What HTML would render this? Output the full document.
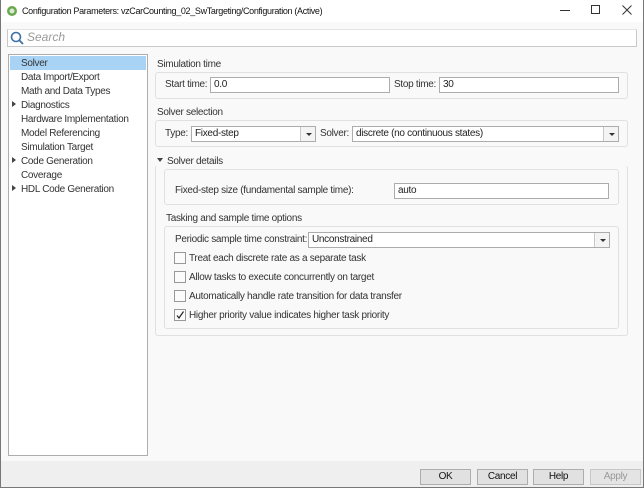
<!DOCTYPE html>
<html><head><style>
*{box-sizing:border-box;margin:0;padding:0}
body{width:644px;height:488px;overflow:hidden;background:#f9f9f9;font-family:"Liberation Sans",sans-serif;font-size:10px;letter-spacing:-0.3px;color:#333;position:relative}
.a{position:absolute;white-space:nowrap}
.inp{position:absolute;background:#fff;border:1px solid #acacac;height:16px;padding-left:3px;line-height:14px;color:#222;overflow:hidden}
.grp{position:absolute;border:1px solid #e0e0e0;border-radius:3px}
.arr{position:absolute;top:0;right:0;width:15px;height:14px;border-left:1px solid #c8c8c8;background:#f4f4f4}
.arr:after{content:"";position:absolute;left:5px;top:6px;border-left:3px solid transparent;border-right:3px solid transparent;border-top:3px solid #333}
.cb{position:absolute;width:12px;height:12px;border:1px solid #999;background:#fbfbfb}
.btn{position:absolute;top:469px;height:16px;width:51px;border:1px solid #adadad;background:#e1e1e1;text-align:center;line-height:14px;color:#111}
.tri{display:inline-block;border-top:3px solid transparent;border-bottom:3px solid transparent;border-left:4px solid #444;margin-right:5px;vertical-align:1px}
</style></head><body>
<div class="a" style="left:0;top:0;width:644px;height:22px;background:#fff"></div>
<div class="a" style="left:0;top:0;width:1px;height:488px;background:#777"></div>
<div class="a" style="left:643px;top:0;width:1px;height:488px;background:#777"></div>
<div class="a" style="left:0;top:487px;width:644px;height:1px;background:#777"></div>
<svg class="a" style="left:6px;top:5px" width="12" height="12"><circle cx="6" cy="6" r="5" fill="#6aa84f"/><circle cx="6" cy="6" r="2.5" fill="#d9ead3"/></svg>
<div class="a" style="left:22px;top:6px;font-size:9px;letter-spacing:-0.33px;color:#111">Configuration Parameters: vzCarCounting_02_SwTargeting/Configuration (Active)</div>
<div class="a" style="left:560px;top:10px;width:10px;height:1px;background:#333"></div>
<div class="a" style="left:591px;top:5px;width:9px;height:9px;border:1px solid #333"></div>
<svg class="a" style="left:622px;top:5px" width="10" height="10"><path d="M0.5 0.5L9.5 9.5M9.5 0.5L0.5 9.5" stroke="#333" stroke-width="1"/></svg>
<div class="a" style="left:7px;top:29px;width:630px;height:18px;background:#fff;border:1px solid #c8c8c8;border-top-color:#e4e4e4"></div>
<svg class="a" style="left:10px;top:31px" width="14" height="14"><circle cx="6" cy="6" r="4.5" fill="none" stroke="#3d6fa8" stroke-width="1.6"/><line x1="9.3" y1="9.3" x2="13" y2="13" stroke="#3d6fa8" stroke-width="1.8"/></svg>
<div class="a" style="left:27px;top:30px;font-size:12px;letter-spacing:0;font-style:italic;color:#9a9a9a">Search</div>
<div class="a" style="left:8px;top:54px;width:140px;height:402px;background:#fff;border:1px solid #adadad"></div>
<div class="a" style="left:10px;top:56px;width:136px;height:14px;background:#a9d3f5"></div>
<div class="a" style="left:12px;top:57px;line-height:14px">
<div style="padding-left:9px">Solver</div>
<div style="padding-left:9px">Data Import/Export</div>
<div style="padding-left:9px">Math and Data Types</div>
<div><span class="tri"></span>Diagnostics</div>
<div style="padding-left:9px">Hardware Implementation</div>
<div style="padding-left:9px">Model Referencing</div>
<div style="padding-left:9px">Simulation Target</div>
<div><span class="tri"></span>Code Generation</div>
<div style="padding-left:9px">Coverage</div>
<div><span class="tri"></span>HDL Code Generation</div>
</div>

<div class="a" style="left:157px;top:59px">Simulation time</div>
<div class="grp" style="left:155px;top:72px;width:473px;height:27px"></div>
<div class="a" style="left:165px;top:79px">Start time:</div>
<div class="inp" style="left:210px;top:77px;width:180px">0.0</div>
<div class="a" style="left:394px;top:79px">Stop time:</div>
<div class="inp" style="left:439px;top:77px;width:180px">30</div>

<div class="a" style="left:157px;top:107px">Solver selection</div>
<div class="grp" style="left:155px;top:120px;width:473px;height:27px"></div>
<div class="a" style="left:165px;top:128px">Type:</div>
<div class="inp" style="left:191px;top:126px;width:125px">Fixed-step<div class="arr"></div></div>
<div class="a" style="left:320px;top:128px">Solver:</div>
<div class="inp" style="left:352px;top:126px;width:267px">discrete (no continuous states)<div class="arr"></div></div>

<div class="a" style="left:157px;top:156px"><span style="display:inline-block;border-left:3px solid transparent;border-right:3px solid transparent;border-top:4px solid #444;margin-right:4px;vertical-align:2px"></span>Solver details</div>
<div class="grp" style="left:155px;top:165px;width:473px;height:171px;border-top-color:transparent"></div>
<div class="grp" style="left:164px;top:169px;width:455px;height:36px"></div>
<div class="a" style="left:175px;top:185px">Fixed-step size (fundamental sample time):</div>
<div class="inp" style="left:394px;top:183px;width:215px">auto</div>

<div class="a" style="left:166px;top:213px">Tasking and sample time options</div>
<div class="grp" style="left:164px;top:226px;width:455px;height:103px"></div>
<div class="a" style="left:175px;top:234px">Periodic sample time constraint:</div>
<div class="inp" style="left:308px;top:232px;width:302px">Unconstrained<div class="arr"></div></div>
<div class="cb" style="left:174px;top:252px"></div><div class="a" style="left:189px;top:253px">Treat each discrete rate as a separate task</div>
<div class="cb" style="left:174px;top:271px"></div><div class="a" style="left:189px;top:272px">Allow tasks to execute concurrently on target</div>
<div class="cb" style="left:174px;top:290px"></div><div class="a" style="left:189px;top:291px">Automatically handle rate transition for data transfer</div>
<div class="cb" style="left:174px;top:309px"><svg width="10" height="10" style="position:absolute;left:0;top:0"><path d="M2 5.5 L4 8 L8.5 1.5" fill="none" stroke="#222" stroke-width="1.2"/></svg></div><div class="a" style="left:189px;top:310px">Higher priority value indicates higher task priority</div>

<div class="a" style="left:1px;top:461px;width:642px;height:26px;background:#efefef"></div>
<div class="btn" style="left:420px">OK</div>
<div class="btn" style="left:477px">Cancel</div>
<div class="btn" style="left:533px">Help</div>
<div class="btn" style="left:590px;color:#999;border-color:#c8c8c8;background:#e4e4e4">Apply</div>
</body></html>
